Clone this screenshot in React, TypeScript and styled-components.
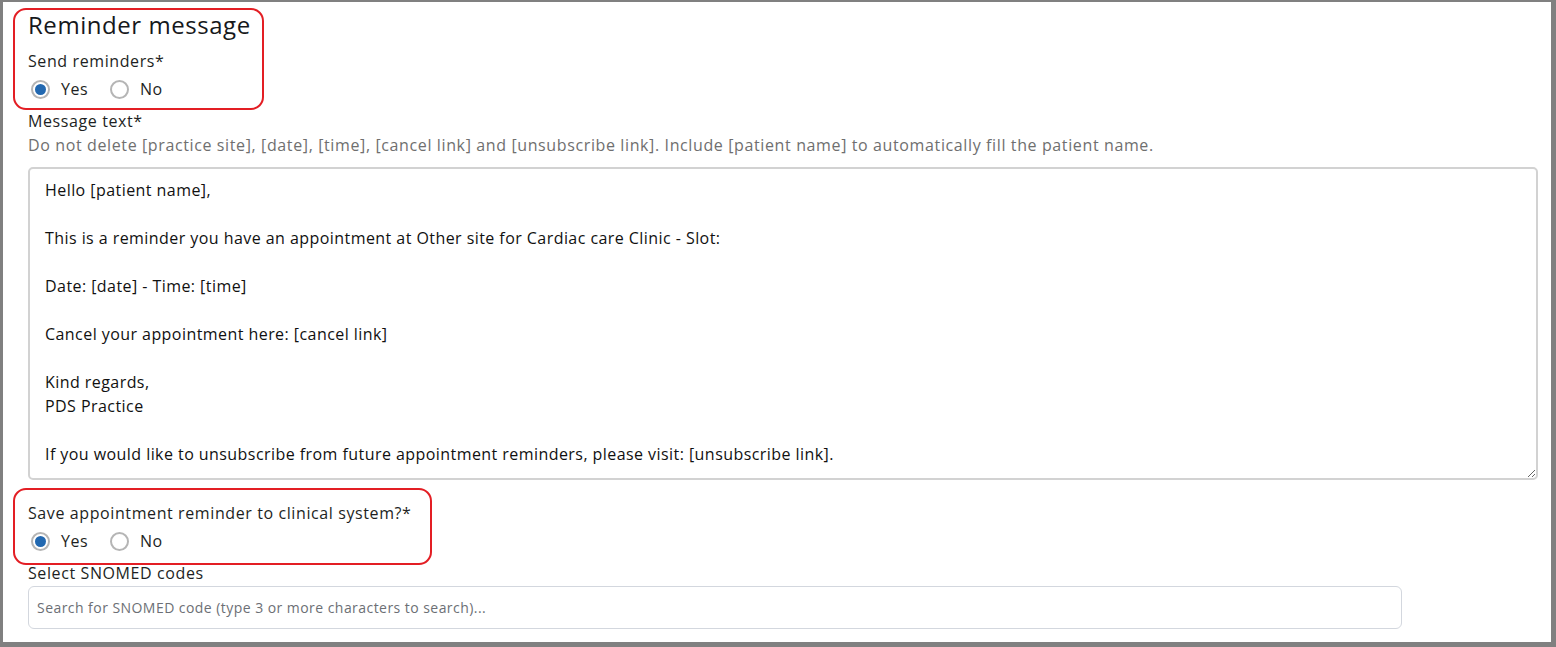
import React from "react";
import styled, { createGlobalStyle } from "styled-components";

const GlobalStyle = createGlobalStyle`
  html, body { margin: 0; padding: 0; background: #fff; }
  body { font-family: "Open Sans", "Noto Sans", sans-serif; color: #1d1f23; }
  * { box-sizing: border-box; }
`;

const Frame = styled.div`
  width: 1556px;
  height: 647px;
  border-style: solid;
  border-color: #808080;
  border-width: 2px 5px 5px 3px;
  padding: 6px 13px 0 10px;
  display: flex;
  flex-direction: column;
  overflow: hidden;
`;

const Highlight = styled.div<{ $w: number; $pb: number; $mt?: number }>`
  width: ${(p) => p.$w}px;
  margin-top: ${(p) => p.$mt ?? 0}px;
  border: 2px solid #e31e24;
  border-radius: 13px;
  padding: 0 0 ${(p) => p.$pb}px 13px;
  display: flex;
  flex-direction: column;
`;

const Plain = styled.div`
  padding-left: 15px;
  display: flex;
  flex-direction: column;
`;

const Title = styled.h2`
  margin: 0;
  font-size: 24px;
  font-weight: 400;
  line-height: 29px;
  letter-spacing: 0.55px;
  color: #16181b;
`;

const Label = styled.div<{ $mt?: number; $lh?: number }>`
  font-size: 16px;
  line-height: ${(p) => p.$lh ?? 24}px;
  letter-spacing: 0.6px;
  margin-top: ${(p) => p.$mt ?? 0}px;
  color: #1d1f23;
`;

const Help = styled.div`
  font-size: 16px;
  line-height: 24px;
  letter-spacing: 0.62px;
  color: #6f6f6f;
`;

const RadioRow = styled.div`
  display: flex;
  align-items: center;
  gap: 22px;
  height: 32px;
  padding-left: 3px;
`;

const RadioOption = styled.label`
  display: flex;
  align-items: center;
  gap: 11px;
  font-size: 16px;
  letter-spacing: 0.5px;
  color: #1d1f23;
`;

const RadioDot = styled.span<{ $on?: boolean }>`
  width: 19px;
  height: 19px;
  border-radius: 50%;
  border: 2px solid #b5b5b5;
  background: #fff;
  display: flex;
  align-items: center;
  justify-content: center;
  &::after {
    content: "";
    width: 11px;
    height: 11px;
    border-radius: 50%;
    background: ${(p) => (p.$on ? "#2268b0" : "transparent")};
  }
`;

const MessageBox = styled.textarea`
  margin-top: 10px;
  width: 1510px;
  height: 313px;
  border: 2px solid #d2d2d2;
  border-radius: 5px;
  padding: 9px 15px;
  font-family: "Open Sans", "Noto Sans", sans-serif;
  font-size: 16px;
  line-height: 24px;
  letter-spacing: 0.44px;
  color: #111;
  resize: vertical;
  outline: none;
`;

const Search = styled.input`
  margin-top: 3px;
  width: 1374px;
  height: 43px;
  border: 1px solid #d3d7de;
  border-radius: 6px;
  padding: 0 8px;
  font-family: "Open Sans", "Noto Sans", sans-serif;
  font-size: 14px;
  letter-spacing: 0.45px;
  outline: none;
  &::placeholder { color: #6c6f75; }
`;

const message = `Hello [patient name],

This is a reminder you have an appointment at Other site for Cardiac care Clinic - Slot:

Date: [date] - Time: [time]

Cancel your appointment here: [cancel link]

Kind regards,
PDS Practice

If you would like to unsubscribe from future appointment reminders, please visit: [unsubscribe link].`;

function YesNo() {
  return (
    <RadioRow>
      <RadioOption>
        <RadioDot $on />
        Yes
      </RadioOption>
      <RadioOption>
        <RadioDot />
        No
      </RadioOption>
    </RadioRow>
  );
}

export default function App() {
  return (
    <>
      <GlobalStyle />
      <Frame>
        <Highlight $w={251} $pb={3}>
          <Title>Reminder message</Title>
          <Label $mt={10}>Send reminders*</Label>
          <YesNo />
        </Highlight>
        <Plain>
          <Label $mt={-1}>Message text*</Label>
          <Help>Do not delete [practice site], [date], [time], [cancel link] and [unsubscribe link]. Include [patient name] to automatically fill the patient name.</Help>
          <MessageBox defaultValue={message} />
        </Plain>
        <Highlight $w={419} $pb={6} $mt={8}>
          <Label $mt={11}>Save appointment reminder to clinical system?*</Label>
          <YesNo />
        </Highlight>
        <Plain>
          <Label $lh={20} $mt={-2}>Select SNOMED codes</Label>
          <Search placeholder="Search for SNOMED code (type 3 or more characters to search)..." />
        </Plain>
      </Frame>
    </>
  );
}
